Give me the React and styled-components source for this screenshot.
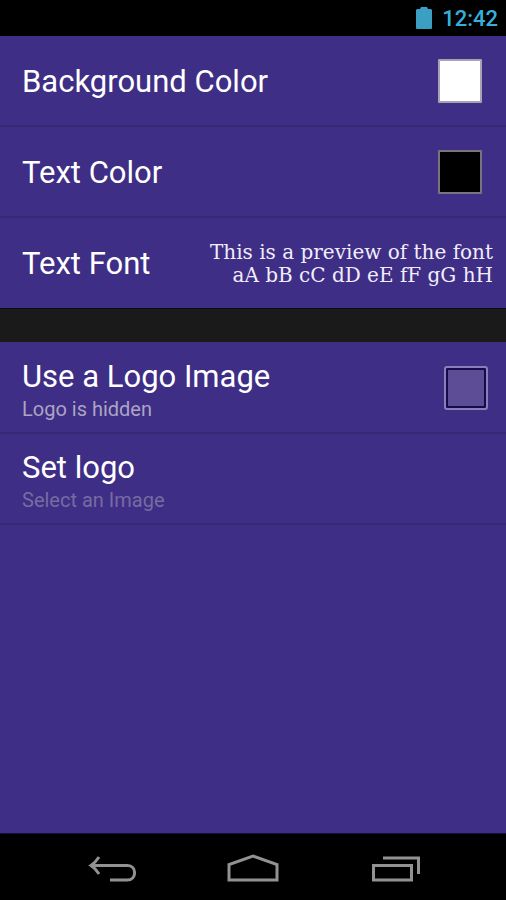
import React, { useState } from "react";
import styled, { createGlobalStyle } from "styled-components";

const GlobalStyle = createGlobalStyle`
  *, *::before, *::after { box-sizing: border-box; }
  body { margin: 0; background: #000; }
`;

const Screen = styled.div`
  display: flex;
  flex-direction: column;
  min-height: 100vh;
  background: #3e2e85;
  color: #fff;
  font-family: Roboto, "Liberation Sans", sans-serif;
`;

const StatusBar = styled.header`
  display: flex;
  align-items: center;
  justify-content: flex-end;
  gap: 10px;
  height: 36px;
  padding: 0 8px;
  background: #000;
  color: #35b0dc;
`;

const Clock = styled.time`
  font-size: 22px;
  font-weight: 500;
  line-height: 36px;
  padding-top: 2px;
`;

const Settings = styled.main`
  flex: 1;
`;

const Divider = styled.div`
  height: 34px;
  background: #191a19;
  border-top: 1px solid #0c0a14;
`;

const Section = styled.section`
  display: flex;
  flex-direction: column;

  ${Divider} + & {
    padding-top: 1px;
  }
`;

const Row = styled.button`
  display: flex;
  align-items: center;
  justify-content: space-between;
  gap: 16px;
  width: 100%;
  min-height: ${(p) => (p.$last ? 90 : 91)}px;
  padding: 0 ${(p) => p.$end || 24}px 0 22px;
  border: 0;
  border-bottom: ${(p) => (p.$last ? "0" : "2px solid #382871")};
  background: none;
  color: inherit;
  font: inherit;
  text-align: left;
  cursor: pointer;
`;

const Texts = styled.span`
  display: flex;
  flex-direction: column;
  padding-top: 4px;
`;

const Title = styled.span`
  padding-top: 2px;
  font-size: 31px;
  line-height: 36px;
  white-space: nowrap;
`;

const Summary = styled.span`
  font-size: 20px;
  line-height: 28px;
  color: ${(p) => (p.$muted ? "#776ba2" : "#aca4c4")};
`;

const Swatch = styled.span`
  width: 44px;
  height: 44px;
  border: 2px solid ${(p) => p.$edge};
  border-radius: 1px;
  background: ${(p) => p.$color};
`;

const FontPreview = styled.span`
  padding-top: 2px;
  font-family: "DejaVu Serif", serif;
  font-size: 20px;
  line-height: 23px;
  color: #f1edfa;
  text-align: right;
`;

const Checkbox = styled.input`
  appearance: none;
  width: 44px;
  height: 44px;
  margin: 0;
  border: 2px solid #8a7fb8;
  border-radius: 3px;
  background: ${(p) => (p.checked ? "#35b0dc" : "#5c4d96")};
  box-shadow: inset 0 0 0 2px #150a4c;
  cursor: pointer;
`;

const NavBar = styled.nav`
  display: flex;
  justify-content: center;
  gap: 44px;
  height: 67px;
  border-top: 1px solid #180e40;
  background: #000;
`;

const NavButton = styled.button`
  display: flex;
  align-items: center;
  justify-content: center;
  width: 98px;
  padding: 4px 0 0;
  border: 0;
  background: none;
  color: #929292;
  cursor: pointer;
`;

const Glyph = styled.svg`
  display: block;
  fill: none;
  stroke: currentColor;
  stroke-width: 3;
`;

const BatteryIcon = () => (
  <svg width="16" height="23" viewBox="0 0 16 23" fill="#3b9fc4" aria-hidden="true">
    <path d="M5 0h6l1 2h3l1 1v18q0 1-1 1H1q-1 0-1-1V3l1-1h3z" />
  </svg>
);

const BackIcon = () => (
  <Glyph width="52" height="30" viewBox="0 0 52 30" aria-hidden="true">
    <path d="M6 11.500H42.500C52 11.500 52 26 42.500 26H25" />
    <path d="M14 3Q10 9 6 11.500Q10 14 14 20" />
  </Glyph>
);

const HomeIcon = () => (
  <Glyph width="54" height="30" viewBox="0 0 54 30" aria-hidden="true">
    <path d="M3 26V10.500L27 2 51 10.500V26Z" />
  </Glyph>
);

const RecentIcon = () => (
  <Glyph width="50" height="30" viewBox="0 0 50 30" aria-hidden="true">
    <path d="M3.500 11.500H41.500V26H3.500Z" />
    <path d="M13 4H48.500V20" />
  </Glyph>
);

export default function App() {
  const [useLogo, setUseLogo] = useState(false);

  return (
    <>
      <GlobalStyle />
      <Screen>
        <StatusBar>
          <BatteryIcon />
          <Clock>12:42</Clock>
        </StatusBar>
        <Settings>
          <Section>
            <Row type="button">
              <Title>Background Color</Title>
              <Swatch $color="#fff" $edge="#a7a2b4" />
            </Row>
            <Row type="button">
              <Title>Text Color</Title>
              <Swatch $color="#000" $edge="#77737f" />
            </Row>
            <Row type="button" $end={13} $last>
              <Title>Text Font</Title>
              <FontPreview>
                This is a preview of the font
                <br />
                aA bB cC dD eE fF gG hH
              </FontPreview>
            </Row>
          </Section>
          <Divider />
          <Section>
            <Row as="label" htmlFor="use-logo" $end={18}>
              <Texts>
                <Title>Use a Logo Image</Title>
                <Summary>Logo is hidden</Summary>
              </Texts>
              <Checkbox
                id="use-logo"
                type="checkbox"
                checked={useLogo}
                onChange={(e) => setUseLogo(e.target.checked)}
              />
            </Row>
            <Row type="button">
              <Texts>
                <Title>Set logo</Title>
                <Summary $muted>Select an Image</Summary>
              </Texts>
            </Row>
          </Section>
        </Settings>
        <NavBar>
          <NavButton type="button" aria-label="Back">
            <BackIcon />
          </NavButton>
          <NavButton type="button" aria-label="Home">
            <HomeIcon />
          </NavButton>
          <NavButton type="button" aria-label="Recent apps">
            <RecentIcon />
          </NavButton>
        </NavBar>
      </Screen>
    </>
  );
}
